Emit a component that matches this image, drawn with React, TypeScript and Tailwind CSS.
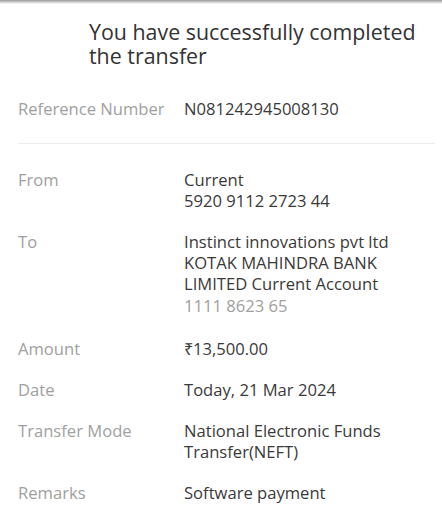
import React from 'react';

type Row = { label: string; lines: string[]; muted?: string };

const ROWS: Row[] = [
  { label: 'From', lines: ['Current', '5920 9112 2723 44'] },
  {
    label: 'To',
    lines: ['Instinct innovations pvt ltd', 'KOTAK MAHINDRA BANK', 'LIMITED Current Account'],
    muted: '1111 8623 65',
  },
  { label: 'Amount', lines: ['₹13,500.00'] },
  { label: 'Date', lines: ['Today, 21 Mar 2024'] },
  { label: 'Transfer Mode', lines: ['National Electronic Funds', 'Transfer(NEFT)'] },
  { label: 'Remarks', lines: ['Software payment'] },
];

const App: React.FC = () => {
  return (
    <div className="w-[442px] h-[530px] bg-white overflow-hidden font-['Open_Sans',sans-serif]">
      {/* shadow from header above */}
      <div className="h-[4px] bg-gradient-to-b from-[#9a9a9a] to-white" />

      <h1 className="pl-[89px] pr-4 pt-[16px] text-[21.4px] leading-[24px] text-[#333]">
        You have successfully completed the transfer
      </h1>

      <div className="ml-[18px] mr-[7px] mt-[30px] pb-[24px] border-b border-[#ededed] flex text-[16.6px] leading-[21px]">
        <div className="w-[166px] shrink-0 text-[#a0a0a0]">Reference Number</div>
        <div className="text-[#3a3a3a]">N081242945008130</div>
      </div>

      <div className="mx-[18px] mt-[25px] flex flex-col gap-[20px] text-[16.6px] leading-[21px]">
        {ROWS.map((row) => (
          <div key={row.label} className="flex">
            <div className="w-[166px] shrink-0 text-[#a0a0a0]">{row.label}</div>
            <div className="text-[#3a3a3a]">
              {row.lines.map((l) => (
                <div key={l}>{l}</div>
              ))}
              {row.muted && <div className="mt-[1px] pb-[2px] text-[#a0a0a0]">{row.muted}</div>}
            </div>
          </div>
        ))}
      </div>
    </div>
  );
};

export default App;
